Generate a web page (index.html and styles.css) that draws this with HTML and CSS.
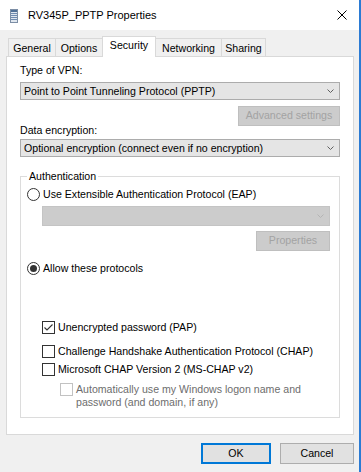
FILE: index.html
```html
<!DOCTYPE html>
<html lang="en">
<head>
    <meta charset="UTF-8">
    <meta name="viewport" content="width=device-width, initial-scale=1.0">
    <title>RV345P_PPTP Properties</title>
    <link rel="stylesheet" href="styles.css">
</head>
<body>
    <div class="window">
        <div class="titlebar">
            <svg class="app-icon" width="8" height="14" viewBox="0 0 8 14">
                <rect x="0.5" y="0.5" width="7" height="13" fill="#dfe6ee" stroke="#7c8ea5"/>
                <rect x="1" y="1" width="6" height="2" fill="#4f6f96"/>
                <rect x="1" y="4" width="6" height="1" fill="#6f8bb0"/>
                <rect x="1" y="6" width="6" height="1" fill="#6f8bb0"/>
                <rect x="1" y="8" width="6" height="1" fill="#6f8bb0"/>
                <rect x="1" y="10" width="6" height="1" fill="#6f8bb0"/>
            </svg>
            <span class="title">RV345P_PPTP Properties</span>
            <svg class="close" width="10" height="10" viewBox="0 0 10 10">
                <path d="M0.5 0.5 L9.5 9.5 M9.5 0.5 L0.5 9.5" stroke="#000" stroke-width="1" fill="none"/>
            </svg>
        </div>

        <div class="client">
            <div class="tabs">
                <div class="tab tab-general">General</div>
                <div class="tab tab-options">Options</div>
                <div class="tab tab-security selected">Security</div>
                <div class="tab tab-networking">Networking</div>
                <div class="tab tab-sharing">Sharing</div>
            </div>

            <div class="panel">
                <div class="label">Type of VPN:</div>
                <div class="combo">
                    <span>Point to Point Tunneling Protocol (PPTP)</span>
                    <svg class="chevron" width="7" height="4" viewBox="0 0 7 4"><path d="M0.5 0.5 L3.5 3.5 L6.5 0.5" stroke="#606060" fill="none"/></svg>
                </div>
                <div class="button-row">
                    <div class="btn disabled btn-advanced">Advanced settings</div>
                </div>

                <div class="label label-encryption">Data encryption:</div>
                <div class="combo">
                    <span>Optional encryption (connect even if no encryption)</span>
                    <svg class="chevron" width="7" height="4" viewBox="0 0 7 4"><path d="M0.5 0.5 L3.5 3.5 L6.5 0.5" stroke="#606060" fill="none"/></svg>
                </div>

                <fieldset class="group">
                    <legend>Authentication</legend>

                    <div class="option">
                        <svg class="radio" width="13" height="13" viewBox="0 0 13 13"><circle cx="6.5" cy="6.5" r="6" fill="#fff" stroke="#333"/></svg>
                        <span>Use Extensible Authentication Protocol (EAP)</span>
                    </div>
                    <div class="combo combo-disabled">
                        <span></span>
                        <svg class="chevron" width="7" height="4" viewBox="0 0 7 4"><path d="M0.5 0.5 L3.5 3.5 L6.5 0.5" stroke="#b4b4b4" fill="none"/></svg>
                    </div>
                    <div class="button-row">
                        <div class="btn disabled btn-properties">Properties</div>
                    </div>

                    <div class="option option-allow">
                        <svg class="radio" width="13" height="13" viewBox="0 0 13 13"><circle cx="6.5" cy="6.5" r="6" fill="#fff" stroke="#333"/><circle cx="6.5" cy="6.5" r="3.5" fill="#333"/></svg>
                        <span>Allow these protocols</span>
                    </div>

                    <div class="option check check-pap">
                        <svg class="box" width="13" height="13" viewBox="0 0 13 13"><rect x="0.5" y="0.5" width="12" height="12" fill="#fff" stroke="#333"/><path d="M2.5 6.5 L5 9 L10.5 3.5" stroke="#333" stroke-width="1.1" fill="none"/></svg>
                        <span>Unencrypted password (PAP)</span>
                    </div>
                    <div class="option check check-chap">
                        <svg class="box" width="13" height="13" viewBox="0 0 13 13"><rect x="0.5" y="0.5" width="12" height="12" fill="#fff" stroke="#333"/></svg>
                        <span>Challenge Handshake Authentication Protocol (CHAP)</span>
                    </div>
                    <div class="option check check-mschap">
                        <svg class="box" width="13" height="13" viewBox="0 0 13 13"><rect x="0.5" y="0.5" width="12" height="12" fill="#fff" stroke="#333"/></svg>
                        <span>Microsoft CHAP Version 2 (MS-CHAP v2)</span>
                    </div>
                    <div class="option check check-auto disabled-text">
                        <svg class="box" width="13" height="13" viewBox="0 0 13 13"><rect x="0.5" y="0.5" width="12" height="12" fill="#fff" stroke="#c2c2c2"/></svg>
                        <span>Automatically use my Windows logon name and password (and domain, if any)</span>
                    </div>
                </fieldset>
            </div>

            <div class="actions">
                <div class="btn btn-ok">OK</div>
                <div class="btn btn-cancel">Cancel</div>
            </div>
        </div>
    </div>
</body>
</html>
```

FILE: styles.css
```css
body {
    margin: 0;
    font-family: "Liberation Sans", Arial, sans-serif;
    font-size: 10.6px;
    line-height: 13px;
    color: #000;
    background-color: #f0f0f0;
}
.window {
    width: 361px;
    height: 472px;
    box-sizing: border-box;
    border-right: 2px solid #2b7bd4;
    background-color: #f0f0f0;
    overflow: hidden;
}
.titlebar {
    height: 30px;
    background-color: #ffffff;
    display: flex;
    align-items: center;
}
.app-icon {
    margin-left: 10px;
    margin-top: 1px;
}
.title {
    margin-left: 10px;
    font-size: 11px;
    flex: 1;
}
.close {
    margin-right: 12px;
}
.client {
    padding: 6px 0 0 6px;
}
.tabs {
    display: flex;
    align-items: flex-end;
    height: 20px;
    padding-left: 2px;
}
.tab {
    box-sizing: border-box;
    height: 18px;
    padding-top: 3px;
    border: 1px solid #d9d9d9;
    border-bottom: none;
    margin-left: -1px;
    text-align: center;
    background-color: #f0f0f0;
}
.tab-general {
    margin-left: 0;
    width: 48px;
}
.tab-options {
    width: 48px;
}
.tab-security {
    width: 54px;
}
.tab-networking {
    width: 67px;
}
.tab-sharing {
    width: 45px;
}
.tab.selected {
    height: 21px;
    padding-top: 2px;
    margin-bottom: -1px;
    background-color: #ffffff;
    position: relative;
    z-index: 1;
}
.panel {
    width: 348px;
    box-sizing: border-box;
    border: 1px solid #d9d9d9;
    background-color: #ffffff;
    padding: 7px 13px 16px 13px;
}
.label-encryption {
    margin-top: -2px;
}
.combo {
    box-sizing: border-box;
    height: 18px;
    margin-top: 5px;
    border: 1px solid #acacac;
    background-color: #e5e5e5;
    display: flex;
    align-items: center;
    justify-content: space-between;
    padding: 0 5px 0 3px;
    line-height: 14px;
}
.combo span {
    margin-top: -1px;
}
.label-encryption + .combo {
    margin-top: 2px;
}
.chevron {
    margin-top: -1px;
}
.button-row {
    display: flex;
    justify-content: flex-end;
}
.btn {
    box-sizing: border-box;
    height: 20px;
    border: 1px solid #adadad;
    background-color: #e1e1e1;
    text-align: center;
    line-height: 17px;
}
.btn.disabled {
    border-color: #bfbfbf;
    background-color: #cccccc;
    color: #a3a3a3;
}
.btn-advanced {
    width: 102px;
    margin-top: 6px;
}
.group {
    margin: 13px 0 0 0;
    padding: 5px 9px 8px 6px;
    border: 1px solid #dcdcdc;
    min-inline-size: 0;
}
.group legend {
    padding: 0 2px;
    line-height: 13px;
}
.option {
    display: flex;
    align-items: flex-start;
}
.option svg {
    flex: none;
    margin-right: 3px;
}
.combo-disabled {
    height: 20px;
    margin-top: 5px;
    margin-left: 15px;
    border-color: #c4c4c4;
    background-color: #cccccc;
}
.btn-properties {
    width: 74px;
    margin-top: 5px;
}
.option-allow {
    margin-top: 11px;
}
.check {
    margin-left: 15px;
}
.check svg {
    margin-right: 3px;
}
.check-pap {
    margin-top: 46px;
}
.check-chap {
    margin-top: 11px;
}
.check-mschap {
    margin-top: 5px;
}
.check-auto {
    margin-top: 7px;
    margin-left: 33px;
}
.check-auto span {
    width: 250px;
}
.disabled-text {
    color: #6d6d6d;
}
.actions {
    width: 348px;
    display: flex;
    justify-content: flex-end;
    gap: 9px;
    margin-top: 8px;
}
.actions .btn {
    height: 21px;
    line-height: 19px;
}
.btn-ok {
    width: 70px;
    border: 2px solid #0078d7;
    line-height: 17px !important;
}
.btn-cancel {
    width: 74px;
}
```
